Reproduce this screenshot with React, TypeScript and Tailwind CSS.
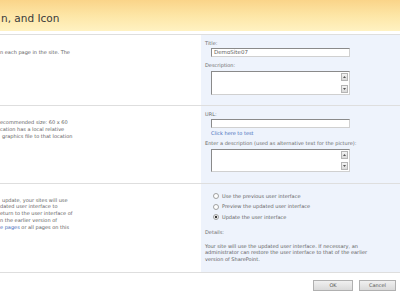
import React from "react";

const ScrollBtn = ({ dir }: { dir: "up" | "down" }) => (
  <div className="w-[7px] h-[8px] border border-[#b5b5b5] bg-gradient-to-b from-[#f4f4f4] to-[#d9d9d9] flex items-center justify-center">
    <svg width="3" height="2" viewBox="0 0 3 2">
      {dir === "up" ? (
        <polygon points="0,2 3,2 1.5,0" fill="#555" />
      ) : (
        <polygon points="0,0 3,0 1.5,2" fill="#555" />
      )}
    </svg>
  </div>
);

const TextArea = ({ h }: { h: string }) => (
  <div
    className={`ml-[6px] w-[139px] ${h} bg-white border border-t-[#8a8a8a] border-l-[#8a8a8a] border-r-[#d0d0d0] border-b-[#d0d0d0] flex justify-end py-px pr-px`}
  >
    <div className="flex flex-col justify-between">
      <ScrollBtn dir="up" />
      <ScrollBtn dir="down" />
    </div>
  </div>
);

const Input = ({ value }: { value?: string }) => (
  <div className="ml-[6px] w-[139px] h-[9px] bg-white border border-t-[#8a8a8a] border-l-[#8a8a8a] border-r-[#d0d0d0] border-b-[#d0d0d0] flex items-center pl-[2px] text-[5.5px] leading-none text-[#606060]">
    {value}
  </div>
);

const Radio = ({ checked }: { checked?: boolean }) => (
  <svg width="6" height="6" viewBox="0 0 6 6" className="shrink-0">
    <circle cx="3" cy="3" r="2.5" fill="#fff" stroke="#8a8a8a" strokeWidth="0.8" />
    {checked && <circle cx="3" cy="3" r="1.2" fill="#333" />}
  </svg>
);

const Sep = () => <div className="h-px bg-[#dedede]" />;

export default function App() {
  return (
    <div
      className="w-[400px] h-[295px] bg-white overflow-hidden text-[#606060]"
      style={{ fontFamily: '"DejaVu Sans", Verdana, sans-serif' }}
    >
      <header className="h-[31px] bg-gradient-to-b from-[#fad489] via-[#fde6a6] to-[#fff2c2] flex items-end pb-[8px] pl-px">
        <span className="text-[10.5px] leading-none text-[#3a3a3a]">n, and Icon</span>
      </header>
      <div className="h-[3px]" />
      <Sep />

      {/* Section 1 */}
      <section className="h-[70px] grid grid-cols-[201px_199px]">
        <div className="pt-[13.5px] text-[5px] leading-[7px] whitespace-nowrap">
          n each page in the site. The
        </div>
        <div className="bg-[#eef3fc] pt-[5px] pl-[4px] text-[5px] leading-[7px]">
          <div className="text-[#6a6a6a]">Title:</div>
          <div className="mt-px">
            <Input value="DemoSite07" />
          </div>
          <div className="mt-[5px] text-[#6a6a6a]">Description:</div>
          <div className="mt-[2px]">
            <TextArea h="h-[24px]" />
          </div>
        </div>
      </section>
      <Sep />

      {/* Section 2 */}
      <section className="h-[77px] grid grid-cols-[201px_199px]">
        <div className="pt-[13px] text-[5px] leading-[6.8px] whitespace-nowrap">
          <div>ecommended size: 60 x 60</div>
          <div>cation has a local relative</div>
          <div className="pl-[2px]">graphics file to that location</div>
        </div>
        <div className="bg-[#eef3fc] pt-[5px] pl-[4px] text-[5px] leading-[7px]">
          <div className="text-[#6a6a6a]">URL:</div>
          <div className="mt-px">
            <Input />
          </div>
          <div className="mt-[2px] ml-[6px] text-[#3d6ab8]">Click here to test</div>
          <div className="mt-[3px] text-[#6a6a6a] whitespace-nowrap">
            Enter a description (used as alternative text for the picture):
          </div>
          <div className="mt-[2px]">
            <TextArea h="h-[23px]" />
          </div>
        </div>
      </section>
      <Sep />

      {/* Section 3 */}
      <section className="h-[88px] grid grid-cols-[201px_199px]">
        <div className="pt-[12.6px] text-[5px] leading-[6.8px] whitespace-nowrap">
          <div className="pl-[2px]">update, your sites will use</div>
          <div>dated user interface to</div>
          <div>eturn to the user interface of</div>
          <div>n the earlier version of</div>
          <div>
            <span className="text-[#3d6ab8]">e pages</span> or all pages on this
          </div>
        </div>
        <div className="bg-[#eef3fc] pt-[7px] pl-[4px] text-[5px] leading-[7px]">
          {[
            { t: "Use the previous user interface", c: false },
            { t: "Preview the updated user interface", c: false },
            { t: "Update the user interface", c: true },
          ].map((r) => (
            <div key={r.t} className="h-[10.5px] flex items-center pl-[8px] gap-[3px]">
              <Radio checked={r.c} />
              <span>{r.t}</span>
            </div>
          ))}
          <div className="mt-[6px] text-[#6a6a6a]">Details:</div>
          <div className="mt-[7px] leading-[6.8px] whitespace-nowrap">
            Your site will use the updated user interface. If necessary, an
            <br />
            administrator can restore the user interface to that of the earlier
            <br />
            version of SharePoint.
          </div>
        </div>
      </section>
      <Sep />

      <div className="flex justify-end gap-[6px] pr-[4px] pt-[7px]">
        <button className="w-[40px] h-[11px] bg-gradient-to-b from-[#f0f0f0] to-[#dadada] border border-[#b0b0b0] text-[5px] leading-none text-[#555]">
          OK
        </button>
        <button className="w-[37px] h-[11px] bg-gradient-to-b from-[#f0f0f0] to-[#dadada] border border-[#b0b0b0] text-[5px] leading-none text-[#555]">
          Cancel
        </button>
      </div>
    </div>
  );
}
